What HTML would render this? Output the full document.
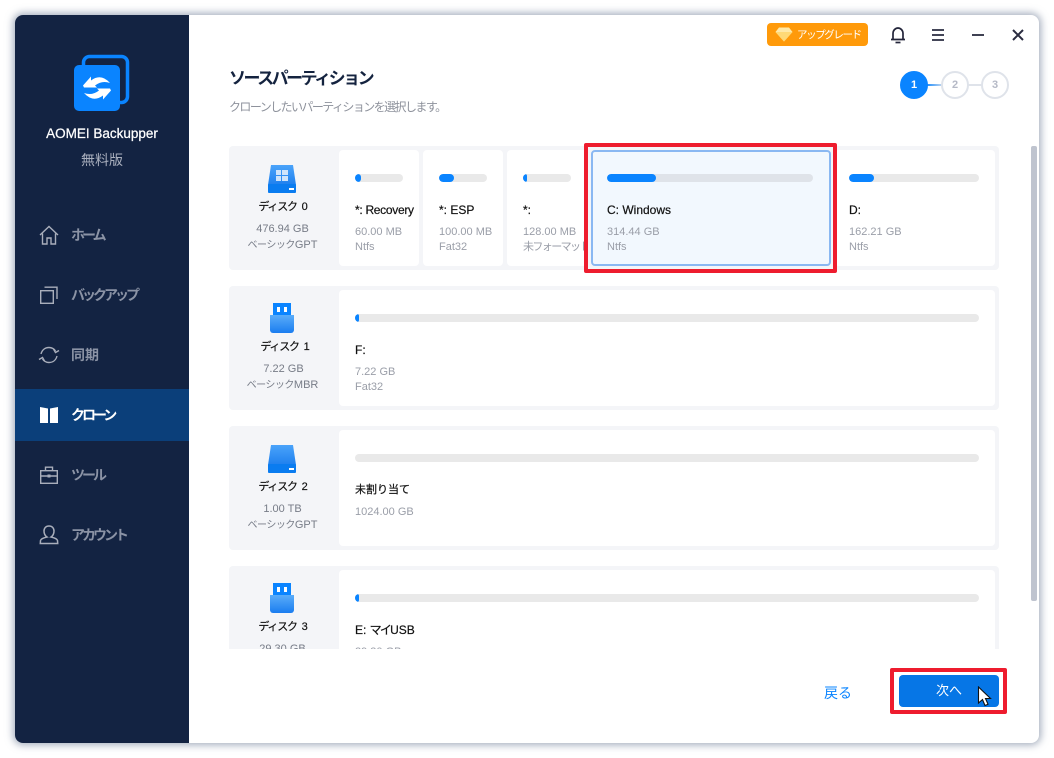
<!DOCTYPE html>
<html lang="ja"><head><meta charset="utf-8"><style>
*{box-sizing:border-box;margin:0;padding:0}
html,body{width:1054px;height:758px;overflow:hidden;background:#fff;font-family:"Liberation Sans","Noto Sans CJK JP",sans-serif}
.a{position:absolute}
.t{position:absolute;white-space:nowrap;line-height:16px}
#win{left:15px;top:15px;width:1024px;height:728px;background:#fff;border-radius:8px;box-shadow:0 0 8px 2px rgba(90,105,135,.55)}
#side{left:15px;top:15px;width:174px;height:728px;background:#132342;border-radius:8px 0 0 8px}
.nav{position:absolute;left:71px;font-size:14px;font-weight:700;color:#8b93a5;line-height:20px;white-space:nowrap;letter-spacing:-3px}
.row{position:absolute;left:229px;width:770px;height:124px;background:#f4f5f8;border-radius:4px}
.card{position:absolute;top:4px;height:116px;background:#fff;border-radius:4px;overflow:hidden}
.bar{position:absolute;top:24px;left:16px;height:8px;border-radius:4px;background:#e9e9e9;overflow:hidden}
.bar i{display:block;height:8px;background:#0a84ff;border-radius:4px}
.n{position:absolute;left:16px;top:52px;font-size:12px;color:#111;white-space:nowrap;line-height:16px;-webkit-text-stroke:.2px #111}
.s{position:absolute;left:16px;top:75px;font-size:11px;color:#9a9ea8;white-space:nowrap;line-height:15px}
.dn{position:absolute;left:0;width:107px;text-align:center;font-size:11px;color:#111;line-height:16px;-webkit-text-stroke:.2px #111;white-space:nowrap;letter-spacing:-1.2px;word-spacing:3px}
.ds{position:absolute;left:0;width:107px;text-align:center;font-size:11px;color:#777c87;line-height:15px;white-space:nowrap}
.k{font-size:10px;letter-spacing:-.5px}
svg{position:absolute;display:block}
.step{position:absolute;top:71px;width:28px;height:28px;border-radius:50%;border:2px solid #dfe3ea;background:#fff;color:#b5b9c6;font-size:11px;font-weight:700;text-align:center;line-height:24px}
</style></head><body>
<div class="a" id="win"></div>
<div class="a" id="side"></div>
<svg style="left:70px;top:52px" width="64" height="62" viewBox="0 0 64 62">
<rect x="13.500" y="4.500" width="44" height="46" rx="6" fill="none" stroke="#0a84ff" stroke-width="3.500"/>
<rect x="4" y="13" width="46" height="46" rx="5" fill="#0a84ff"/>
<path d="M13 33.500L21 24.500V28.500Q31 21 40 31Q32 28 25 33.500L27 35.500H14z" fill="#fff"/>
<path d="M41 38.500L33 47.500V43.500Q23 51 14 41Q22 44 29 38.500L27 36.500H40z" fill="#fff"/>
</svg>
<div class="t" style="left:15px;width:174px;top:126px;text-align:center;color:#fff;font-size:13.500px;-webkit-text-stroke:.25px #fff">AOMEI Backupper</div>
<div class="t" style="left:15px;width:174px;top:152px;text-align:center;color:#a9afbd;font-size:14px">無料版</div>

<div class="a" style="left:15px;top:389px;width:174px;height:52px;background:#0b3f7a"></div>

<svg style="left:38px;top:225px" width="22" height="20" viewBox="0 0 22 20" fill="none" stroke="#a9aebb" stroke-width="1.400"><path d="M2 10l9-8.500 9 8.500M4.500 8.500V19h4.500v-6h4v6h4.500V8.500"/></svg>
<div class="nav" style="top:225px">ホーム</div>
<svg style="left:39px;top:285px" width="20" height="20" viewBox="0 0 20 20" fill="none" stroke="#a9aebb" stroke-width="1.400"><rect x="1.700" y="5.700" width="12.600" height="12.600"/><path d="M5.500 2.200h12.500V14"/></svg>
<div class="nav" style="top:285px">バックアップ</div>
<svg style="left:38px;top:345px" width="22" height="20" viewBox="0 0 22 20" fill="none" stroke="#a9aebb" stroke-width="1.400"><path d="M3 9c1-4 4-6.500 8-6.500 3 0 5 1.300 6.500 3.500M19 11c-1 4-4 6.500-8 6.500-3 0-5-1.300-6.500-3.500"/><path d="M21 5.500l-3.500 2-2-3.500M1 14.500l3.500-2 2 3.500"/></svg>
<div class="nav" style="top:345px;letter-spacing:0">同期</div>
<svg style="left:40px;top:407px" width="18" height="16" viewBox="0 0 18 16" fill="#fff"><path d="M0 0l8 1.500V16H0zM18 0l-8 1.500V16h8z"/></svg>
<div class="nav" style="top:405px;color:#fff">クローン</div>
<svg style="left:39px;top:465px" width="20" height="20" viewBox="0 0 20 20" fill="none" stroke="#a9aebb" stroke-width="1.400"><rect x="1.700" y="5.700" width="16.600" height="12.600"/><path d="M6.500 5.500V2.200h7v3.300M2 11h16"/><rect x="8.500" y="9.500" width="3" height="3" fill="#a9aebb" stroke="none"/></svg>
<div class="nav" style="top:465px">ツール</div>
<svg style="left:39px;top:524px" width="20" height="21" viewBox="0 0 20 21" fill="none" stroke="#a9aebb" stroke-width="1.500"><path d="M10 2c3 0 5 2 5 5s-1.500 5-3 6c3 .7 6 1.500 6.500 3.500l.2 3H1.300l.2-3C2 14.500 5 13.700 8 13c-1.500-1-3-3-3-6s2-5 5-5z"/></svg>
<div class="nav" style="top:525px">アカウント</div>

<div class="a" style="left:767px;top:23px;width:101px;height:23px;background:#ff9a0a;border-radius:4px"></div>
<svg style="left:775px;top:27px" width="18" height="15" viewBox="0 0 18 15"><path d="M4 .5h10l3.500 4.500L9 14.500.5 5z" fill="#ffe9a8"/><path d="M.5 5h17L9 14.500z" fill="#ffd976"/></svg>
<div class="t" style="left:797px;top:27px;color:#fff;font-size:10.500px;letter-spacing:-1.400px">アップグレード</div>
<svg style="left:890px;top:26px" width="16" height="18" viewBox="0 0 16 18" fill="none" stroke="#23253a" stroke-width="1.700"><path d="M1 13.500h14M3 13.500V7.500c0-3 2.200-5.500 5-5.500s5 2.500 5 5.500v6"/><path d="M5.500 16.500h5"/></svg>
<svg style="left:931px;top:28px" width="14" height="14" viewBox="0 0 14 14" stroke="#2a2c40" stroke-width="1.800"><path d="M1 2h12M1 7h12M1 12h12"/></svg>
<svg style="left:971px;top:28px" width="14" height="14" viewBox="0 0 14 14" stroke="#2a2c40" stroke-width="1.800"><path d="M1 7h12"/></svg>
<svg style="left:1011px;top:28px" width="14" height="14" viewBox="0 0 14 14" stroke="#2a2c40" stroke-width="2"><path d="M2 2l10 10M12 2L2 12"/></svg>

<div class="t" style="left:229px;top:67px;font-size:17px;line-height:24px;font-weight:700;color:#14233f;letter-spacing:-2.500px">ソースパーティション</div>
<div class="t" style="left:229px;top:99px;font-size:12px;color:#8e929c;letter-spacing:-1.570px">クローンしたいパーティションを選択します。</div>

<div class="a" style="left:925px;top:84px;width:20px;height:2px;background:linear-gradient(90deg,#0a84ff,#dfe3ea)"></div>
<div class="a" style="left:966px;top:84px;width:18px;height:2px;background:#dfe3ea"></div>
<div class="step" style="left:900px;background:#0a84ff;border-color:#0a84ff;color:#fff">1</div>
<div class="step" style="left:941px">2</div>
<div class="step" style="left:981px">3</div>

<svg width="0" height="0" style="position:absolute"><defs>
<linearGradient id="g1" x1="0" y1="0" x2="0" y2="1"><stop offset="0" stop-color="#4aa3fa"/><stop offset="1" stop-color="#1f80ee"/></linearGradient>
<linearGradient id="g2" x1="0" y1="0" x2="0" y2="1"><stop offset="0" stop-color="#5aacf9"/><stop offset="1" stop-color="#1a7df0"/></linearGradient>
</defs></svg>

<div class="a" style="left:0;top:0;width:1054px;height:649px;overflow:hidden">
<div class="row" style="top:146px">
 <svg style="left:38px;top:18px" width="30" height="30" viewBox="0 0 30 30"><path d="M4 1h22l3 20H1z" fill="url(#g1)"/><rect x="1" y="20" width="28" height="9" rx="1" fill="#0a7cf0"/><path d="M9 6h5v5H9zM15 6h6v5h-6zM9 12h5v5H9zM15 12h6v5h-6z" fill="#cfe4fb"/><rect x="22" y="24" width="5" height="2" fill="#fff"/></svg>
 <div class="dn" style="top:53px">ディスク 0</div>
 <div class="ds" style="top:76px">476.94 GB</div><div class="ds" style="top:92px"><span class="k">ベーシック</span>GPT</div>
 <div class="card" style="left:110px;width:80px"><div class="bar" style="width:48px"><i style="width:6px"></i></div><div class="n" style="letter-spacing:-.3px">*: Recovery</div><div class="s">60.00 MB<br>Ntfs</div></div>
 <div class="card" style="left:194px;width:80px"><div class="bar" style="width:48px"><i style="width:15px"></i></div><div class="n">*: ESP</div><div class="s">100.00 MB<br>Fat32</div></div>
 <div class="card" style="left:278px;width:80px"><div class="bar" style="width:48px"><i style="width:4px"></i></div><div class="n">*:</div><div class="s">128.00 MB<br><span style="letter-spacing:-1.600px">未フォーマット</span></div></div>
 <div class="card" style="left:362px;width:240px;background:#f2f8fe;border:2px solid #8ab8f2"><div class="bar" style="left:14px;width:206px;background:#dfe3e9;top:22px"><i style="width:49px"></i></div><div class="n" style="left:14px;top:50px">C: Windows</div><div class="s" style="left:14px;top:73px">314.44 GB<br>Ntfs</div></div>
 <div class="card" style="left:606px;width:160px"><div class="bar" style="left:14px;width:130px"><i style="width:25px"></i></div><div class="n" style="left:14px">D:</div><div class="s" style="left:14px">162.21 GB<br>Ntfs</div></div>
</div>

<div class="row" style="top:286px">
 <svg style="left:40px;top:17px" width="26" height="32" viewBox="0 0 26 32"><rect x="4" y="0" width="18" height="13" fill="#0a84ff"/><rect x="8" y="4" width="3" height="5" fill="#fff"/><rect x="15" y="4" width="3" height="5" fill="#fff"/><path d="M1 12h24v15a3 3 0 0 1-3 3H4a3 3 0 0 1-3-3z" fill="url(#g2)"/></svg>
 <div class="dn" style="top:53px;left:2px">ディスク 1</div>
 <div class="ds" style="top:76px;left:1px">7.22 GB</div><div class="ds" style="top:92px"><span class="k">ベーシック</span>MBR</div>
 <div class="card" style="left:110px;width:656px"><div class="bar" style="width:624px"><i style="width:4px"></i></div><div class="n">F:</div><div class="s">7.22 GB<br>Fat32</div></div>
</div>

<div class="row" style="top:426px">
 <svg style="left:38px;top:18px" width="30" height="30" viewBox="0 0 30 30"><path d="M4 1h22l3 20H1z" fill="url(#g1)"/><rect x="1" y="20" width="28" height="9" rx="1" fill="#0a7cf0"/><rect x="22" y="24" width="5" height="2" fill="#fff"/></svg>
 <div class="dn" style="top:53px">ディスク 2</div>
 <div class="ds" style="top:76px">1.00 TB</div><div class="ds" style="top:92px"><span class="k">ベーシック</span>GPT</div>
 <div class="card" style="left:110px;width:656px"><div class="bar" style="width:624px"></div><div class="n" style="font-size:11px">未割り当て</div><div class="s">1024.00 GB</div></div>
</div>

<div class="row" style="top:566px">
 <svg style="left:40px;top:17px" width="26" height="32" viewBox="0 0 26 32"><rect x="4" y="0" width="18" height="13" fill="#0a84ff"/><rect x="8" y="4" width="3" height="5" fill="#fff"/><rect x="15" y="4" width="3" height="5" fill="#fff"/><path d="M1 12h24v15a3 3 0 0 1-3 3H4a3 3 0 0 1-3-3z" fill="url(#g2)"/></svg>
 <div class="dn" style="top:53px">ディスク 3</div>
 <div class="ds" style="top:76px">29.30 GB</div>
 <div class="card" style="left:110px;width:656px"><div class="bar" style="width:624px"><i style="width:4px"></i></div><div class="n">E: <span style="letter-spacing:-1.800px">マイ</span>USB</div><div class="s">29.30 GB</div></div>
</div>
</div>

<div class="a" style="left:1031px;top:146px;width:6px;height:455px;background:#bfc4cf;border-radius:2px"></div>

<div class="a" style="left:584px;top:143px;width:253px;height:130px;border:4px solid #ee1c2e;border-radius:2px"></div>

<div class="t" style="left:824px;top:684px;font-size:14px;line-height:18px;color:#0a84ff">戻る</div>
<div class="a" style="left:890px;top:668px;width:117px;height:46px;border:4px solid #ee1c2e;border-radius:2px"></div>
<div class="a" style="left:899px;top:675px;width:100px;height:32px;background:#0676e6;border-radius:4px"></div>
<div class="t" style="left:936px;top:683px;font-size:13px;color:#fff">次へ</div>
<svg style="left:977px;top:686px" width="15" height="22" viewBox="0 0 15 22"><path d="M1.500 1v16l4-3.500 2.500 6 3-1.300-2.500-5.700h5z" fill="#fff" stroke="#111" stroke-width="1.100"/></svg>
</body></html>
